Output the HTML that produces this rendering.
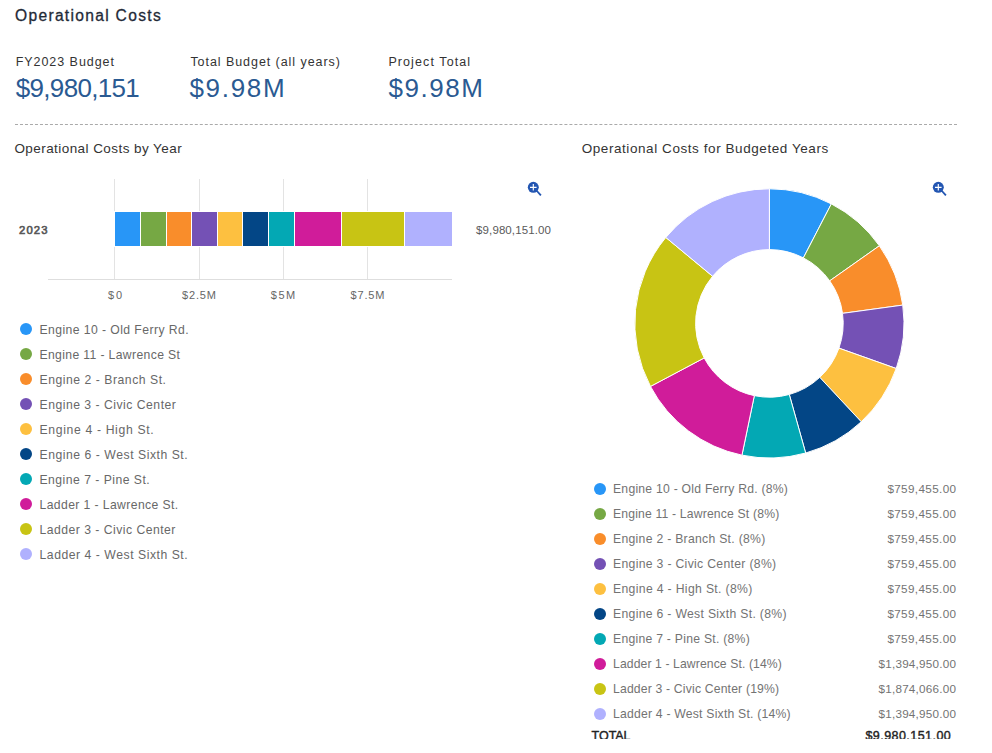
<!DOCTYPE html>
<html><head><meta charset="utf-8"><title>Operational Costs</title>
<style>
html,body{margin:0;padding:0;background:#fff;}
body{width:992px;height:753px;overflow:hidden;position:relative;font-family:"Liberation Sans",sans-serif;}
.t{position:absolute;line-height:0;white-space:pre;}
svg{position:absolute;left:0;top:0;}
</style></head><body>

<div class="t" style="left:15.00px;top:15.59px;font-size:15.6px;font-weight:400;color:#1f2a37;letter-spacing:1.305px;-webkit-text-stroke:0.3px #1f2a37;">Operational Costs</div>
<div class="t" style="left:15.70px;top:61.67px;font-size:12.5px;color:#333;letter-spacing:0.950px;">FY2023 Budget</div>
<div class="t" style="left:15.70px;top:87.99px;font-size:26px;color:#2a5a92;letter-spacing:-0.665px;">$9,980,151</div>
<div class="t" style="left:190.40px;top:61.67px;font-size:12.5px;color:#333;letter-spacing:0.943px;">Total Budget (all years)</div>
<div class="t" style="left:189.40px;top:87.99px;font-size:26px;color:#2a5a92;letter-spacing:1.720px;">$9.98M</div>
<div class="t" style="left:388.40px;top:61.67px;font-size:12.5px;color:#333;letter-spacing:1.093px;">Project Total</div>
<div class="t" style="left:388.40px;top:87.99px;font-size:26px;color:#2a5a92;letter-spacing:1.560px;">$9.98M</div>
<div class="t" style="left:14.40px;top:148.82px;font-size:13.5px;color:#333;letter-spacing:0.434px;">Operational Costs by Year</div>
<div class="t" style="left:581.70px;top:148.82px;font-size:13.5px;color:#333;letter-spacing:0.569px;">Operational Costs for Budgeted Years</div>
<div class="t" style="left:19.00px;top:229.88px;font-size:11.3px;font-weight:400;color:#555;letter-spacing:1.095px;-webkit-text-stroke:0.6px #555;">2023</div>
<div class="t" style="left:476.10px;top:230.02px;font-size:11.5px;color:#5a5a5a;letter-spacing:0.100px;">$9,980,151.00</div>
<div class="t" style="left:65.00px;width:100px;text-align:center;top:294.99px;font-size:11px;color:#666;letter-spacing:2.000px;text-indent:2.000px;">$0</div>
<div class="t" style="left:149.00px;width:100px;text-align:center;top:294.99px;font-size:11px;color:#666;letter-spacing:0.850px;text-indent:0.850px;">$2.5M</div>
<div class="t" style="left:233.00px;width:100px;text-align:center;top:294.99px;font-size:11px;color:#666;letter-spacing:1.450px;text-indent:1.450px;">$5M</div>
<div class="t" style="left:317.50px;width:100px;text-align:center;top:294.99px;font-size:11px;color:#666;letter-spacing:0.850px;text-indent:0.850px;">$7.5M</div>
<div style="position:absolute;left:15px;top:124px;width:942px;height:0;border-top:1px dashed #aaa;"></div>
<div style="position:absolute;left:20px;top:323px;width:12px;height:12px;border-radius:50%;background:#2896f7;"></div>
<div class="t" style="left:39.50px;top:329.77px;font-size:12.2px;color:#686868;letter-spacing:0.425px;">Engine 10 - Old Ferry Rd.</div>
<div style="position:absolute;left:20px;top:348px;width:12px;height:12px;border-radius:50%;background:#76a844;"></div>
<div class="t" style="left:39.50px;top:354.77px;font-size:12.2px;color:#686868;letter-spacing:0.355px;">Engine 11 - Lawrence St</div>
<div style="position:absolute;left:20px;top:373px;width:12px;height:12px;border-radius:50%;background:#f98d2b;"></div>
<div class="t" style="left:39.50px;top:379.77px;font-size:12.2px;color:#686868;letter-spacing:0.530px;">Engine 2 - Branch St.</div>
<div style="position:absolute;left:20px;top:398px;width:12px;height:12px;border-radius:50%;background:#7451b5;"></div>
<div class="t" style="left:39.50px;top:404.77px;font-size:12.2px;color:#686868;letter-spacing:0.502px;">Engine 3 - Civic Center</div>
<div style="position:absolute;left:20px;top:423px;width:12px;height:12px;border-radius:50%;background:#fdc040;"></div>
<div class="t" style="left:39.50px;top:429.77px;font-size:12.2px;color:#686868;letter-spacing:0.656px;">Engine 4 - High St.</div>
<div style="position:absolute;left:20px;top:448px;width:12px;height:12px;border-radius:50%;background:#034686;"></div>
<div class="t" style="left:39.50px;top:454.77px;font-size:12.2px;color:#686868;letter-spacing:0.538px;">Engine 6 - West Sixth St.</div>
<div style="position:absolute;left:20px;top:473px;width:12px;height:12px;border-radius:50%;background:#03a8b4;"></div>
<div class="t" style="left:39.50px;top:479.77px;font-size:12.2px;color:#686868;letter-spacing:0.477px;">Engine 7 - Pine St.</div>
<div style="position:absolute;left:20px;top:498px;width:12px;height:12px;border-radius:50%;background:#d01c9a;"></div>
<div class="t" style="left:39.50px;top:504.77px;font-size:12.2px;color:#686868;letter-spacing:0.391px;">Ladder 1 - Lawrence St.</div>
<div style="position:absolute;left:20px;top:523px;width:12px;height:12px;border-radius:50%;background:#c8c414;"></div>
<div class="t" style="left:39.50px;top:529.77px;font-size:12.2px;color:#686868;letter-spacing:0.481px;">Ladder 3 - Civic Center</div>
<div style="position:absolute;left:20px;top:548px;width:12px;height:12px;border-radius:50%;background:#b0b1fe;"></div>
<div class="t" style="left:39.50px;top:554.77px;font-size:12.2px;color:#686868;letter-spacing:0.538px;">Ladder 4 - West Sixth St.</div>
<div style="position:absolute;left:594px;top:483px;width:12px;height:12px;border-radius:50%;background:#2896f7;"></div>
<div class="t" style="left:613.00px;top:488.77px;font-size:12.2px;color:#737373;letter-spacing:0.238px;">Engine 10 - Old Ferry Rd. (8%)</div>
<div class="t" style="right:36.00px;top:488.95px;font-size:11.7px;color:#737373;letter-spacing:0.360px;margin-right:-0.360px;">$759,455.00</div>
<div style="position:absolute;left:594px;top:508px;width:12px;height:12px;border-radius:50%;background:#76a844;"></div>
<div class="t" style="left:613.00px;top:513.77px;font-size:12.2px;color:#737373;letter-spacing:0.168px;">Engine 11 - Lawrence St (8%)</div>
<div class="t" style="right:36.00px;top:513.95px;font-size:11.7px;color:#737373;letter-spacing:0.360px;margin-right:-0.360px;">$759,455.00</div>
<div style="position:absolute;left:594px;top:533px;width:12px;height:12px;border-radius:50%;background:#f98d2b;"></div>
<div class="t" style="left:613.00px;top:538.77px;font-size:12.2px;color:#737373;letter-spacing:0.292px;">Engine 2 - Branch St. (8%)</div>
<div class="t" style="right:36.00px;top:538.95px;font-size:11.7px;color:#737373;letter-spacing:0.360px;margin-right:-0.360px;">$759,455.00</div>
<div style="position:absolute;left:594px;top:558px;width:12px;height:12px;border-radius:50%;background:#7451b5;"></div>
<div class="t" style="left:613.00px;top:563.77px;font-size:12.2px;color:#737373;letter-spacing:0.321px;">Engine 3 - Civic Center (8%)</div>
<div class="t" style="right:36.00px;top:563.95px;font-size:11.7px;color:#737373;letter-spacing:0.360px;margin-right:-0.360px;">$759,455.00</div>
<div style="position:absolute;left:594px;top:583px;width:12px;height:12px;border-radius:50%;background:#fdc040;"></div>
<div class="t" style="left:613.00px;top:588.77px;font-size:12.2px;color:#737373;letter-spacing:0.343px;">Engine 4 - High St. (8%)</div>
<div class="t" style="right:36.00px;top:588.95px;font-size:11.7px;color:#737373;letter-spacing:0.360px;margin-right:-0.360px;">$759,455.00</div>
<div style="position:absolute;left:594px;top:608px;width:12px;height:12px;border-radius:50%;background:#034686;"></div>
<div class="t" style="left:613.00px;top:613.77px;font-size:12.2px;color:#737373;letter-spacing:0.314px;">Engine 6 - West Sixth St. (8%)</div>
<div class="t" style="right:36.00px;top:613.95px;font-size:11.7px;color:#737373;letter-spacing:0.360px;margin-right:-0.360px;">$759,455.00</div>
<div style="position:absolute;left:594px;top:633px;width:12px;height:12px;border-radius:50%;background:#03a8b4;"></div>
<div class="t" style="left:613.00px;top:638.77px;font-size:12.2px;color:#737373;letter-spacing:0.262px;">Engine 7 - Pine St. (8%)</div>
<div class="t" style="right:36.00px;top:638.95px;font-size:11.7px;color:#737373;letter-spacing:0.360px;margin-right:-0.360px;">$759,455.00</div>
<div style="position:absolute;left:594px;top:658px;width:12px;height:12px;border-radius:50%;background:#d01c9a;"></div>
<div class="t" style="left:613.00px;top:663.77px;font-size:12.2px;color:#737373;letter-spacing:0.102px;">Ladder 1 - Lawrence St. (14%)</div>
<div class="t" style="right:36.00px;top:663.95px;font-size:11.7px;color:#737373;letter-spacing:0.231px;margin-right:-0.231px;">$1,394,950.00</div>
<div style="position:absolute;left:594px;top:683px;width:12px;height:12px;border-radius:50%;background:#c8c414;"></div>
<div class="t" style="left:613.00px;top:688.77px;font-size:12.2px;color:#737373;letter-spacing:0.175px;">Ladder 3 - Civic Center (19%)</div>
<div class="t" style="right:36.00px;top:688.95px;font-size:11.7px;color:#737373;letter-spacing:0.231px;margin-right:-0.231px;">$1,874,066.00</div>
<div style="position:absolute;left:594px;top:708px;width:12px;height:12px;border-radius:50%;background:#b0b1fe;"></div>
<div class="t" style="left:613.00px;top:713.77px;font-size:12.2px;color:#737373;letter-spacing:0.215px;">Ladder 4 - West Sixth St. (14%)</div>
<div class="t" style="right:36.00px;top:713.95px;font-size:11.7px;color:#737373;letter-spacing:0.231px;margin-right:-0.231px;">$1,394,950.00</div>
<svg width="992" height="753" viewBox="0 0 992 753">
<rect x="114" y="179" width="1" height="100" fill="#e3e3e3"/>
<rect x="199" y="179" width="1" height="100" fill="#e3e3e3"/>
<rect x="283" y="179" width="1" height="100" fill="#e3e3e3"/>
<rect x="367" y="179" width="1" height="100" fill="#e3e3e3"/>
<rect x="48" y="279" width="404" height="1" fill="#dedede"/>
<rect x="114" y="211" width="338" height="36" fill="#fff"/>
<rect x="115" y="212" width="25" height="34" fill="#2896f7"/>
<rect x="141" y="212" width="25" height="34" fill="#76a844"/>
<rect x="167" y="212" width="24" height="34" fill="#f98d2b"/>
<rect x="192" y="212" width="25" height="34" fill="#7451b5"/>
<rect x="218" y="212" width="24" height="34" fill="#fdc040"/>
<rect x="243" y="212" width="25" height="34" fill="#034686"/>
<rect x="269" y="212" width="25" height="34" fill="#03a8b4"/>
<rect x="295" y="212" width="46" height="34" fill="#d01c9a"/>
<rect x="342" y="212" width="62" height="34" fill="#c8c414"/>
<rect x="405" y="212" width="47" height="34" fill="#b0b1fe"/>
<path d="M769.40,188.80 A134.6,134.6 0 0 1 831.33,203.89 L803.36,257.88 A73.8,73.8 0 0 0 769.40,249.60 Z" fill="#2896f7" stroke="#fff" stroke-width="1.0" stroke-linejoin="round"/>
<path d="M831.33,203.89 A134.6,134.6 0 0 1 879.37,245.79 L829.70,280.85 A73.8,73.8 0 0 0 803.36,257.88 Z" fill="#76a844" stroke="#fff" stroke-width="1.0" stroke-linejoin="round"/>
<path d="M879.37,245.79 A134.6,134.6 0 0 1 902.75,305.10 L842.51,313.36 A73.8,73.8 0 0 0 829.70,280.85 Z" fill="#f98d2b" stroke="#fff" stroke-width="1.0" stroke-linejoin="round"/>
<path d="M902.75,305.10 A134.6,134.6 0 0 1 896.22,368.51 L838.93,348.13 A73.8,73.8 0 0 0 842.51,313.36 Z" fill="#7451b5" stroke="#fff" stroke-width="1.0" stroke-linejoin="round"/>
<path d="M896.22,368.51 A134.6,134.6 0 0 1 861.24,421.80 L819.76,377.35 A73.8,73.8 0 0 0 838.93,348.13 Z" fill="#fdc040" stroke="#fff" stroke-width="1.0" stroke-linejoin="round"/>
<path d="M861.24,421.80 A134.6,134.6 0 0 1 805.67,453.02 L789.29,394.47 A73.8,73.8 0 0 0 819.76,377.35 Z" fill="#034686" stroke="#fff" stroke-width="1.0" stroke-linejoin="round"/>
<path d="M805.67,453.02 A134.6,134.6 0 0 1 741.96,455.17 L754.35,395.65 A73.8,73.8 0 0 0 789.29,394.47 Z" fill="#03a8b4" stroke="#fff" stroke-width="1.0" stroke-linejoin="round"/>
<path d="M741.96,455.17 A134.6,134.6 0 0 1 650.47,386.42 L704.19,357.95 A73.8,73.8 0 0 0 754.35,395.65 Z" fill="#d01c9a" stroke="#fff" stroke-width="1.0" stroke-linejoin="round"/>
<path d="M650.47,386.42 A134.6,134.6 0 0 1 665.81,237.45 L712.60,276.28 A73.8,73.8 0 0 0 704.19,357.95 Z" fill="#c8c414" stroke="#fff" stroke-width="1.0" stroke-linejoin="round"/>
<path d="M665.81,237.45 A134.6,134.6 0 0 1 769.40,188.80 L769.40,249.60 A73.8,73.8 0 0 0 712.60,276.28 Z" fill="#b0b1fe" stroke="#fff" stroke-width="1.0" stroke-linejoin="round"/>
<g><line x1="536.5" y1="190.5" x2="540.9" y2="195.4" stroke="#2356b2" stroke-width="1.8" stroke-linecap="butt"/><circle cx="533.3" cy="187.3" r="5.5" fill="#2356b2"/><path d="M530.0,187.3 H536.5999999999999 M533.3,184.0 V190.60000000000002" stroke="#fff" stroke-width="1.15"/></g>
<g><line x1="941.5" y1="190.5" x2="945.9" y2="195.4" stroke="#2356b2" stroke-width="1.8" stroke-linecap="butt"/><circle cx="938.3" cy="187.3" r="5.5" fill="#2356b2"/><path d="M935.0,187.3 H941.5999999999999 M938.3,184.0 V190.60000000000002" stroke="#fff" stroke-width="1.15"/></g>
</svg>
<div style="position:absolute;left:0;top:0;width:992px;height:739px;overflow:hidden;">
<div class="t" style="left:591.60px;top:735.67px;font-size:12.5px;font-weight:400;color:#222;letter-spacing:-0.050px;-webkit-text-stroke:0.4px #222;">TOTAL</div>
<div class="t" style="right:41.20px;top:735.67px;font-size:12.5px;font-weight:400;color:#222;letter-spacing:0.453px;margin-right:-0.453px;-webkit-text-stroke:0.4px #222;">$9,980,151.00</div>
</div>
</body></html>
